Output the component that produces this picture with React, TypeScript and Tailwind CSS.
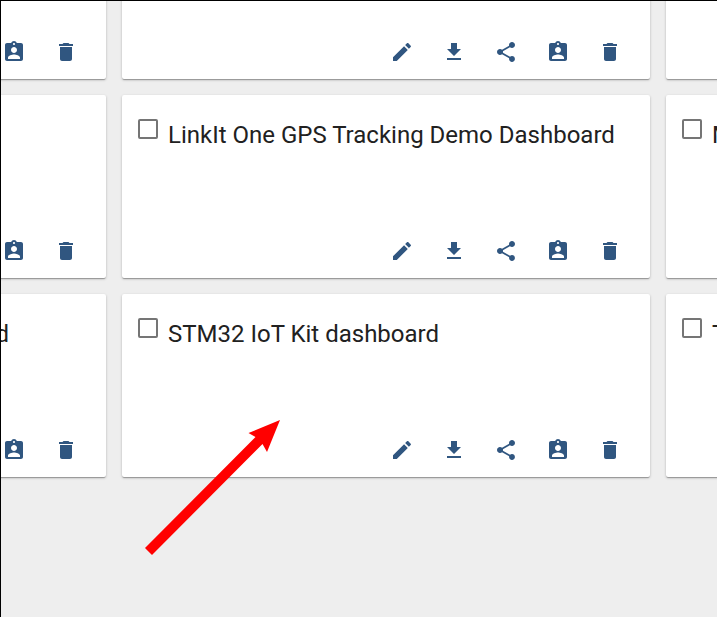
const icons = [
  "M3 17.25V21h3.75L17.81 9.94l-3.75-3.75L3 17.25zM20.71 7.04c.39-.39.39-1.02 0-1.41l-2.34-2.34c-.39-.39-1.02-.39-1.41 0l-1.83 1.83 3.75 3.75 1.83-1.83z",
  "M19 9h-4V3H9v6H5l7 7 7-7zM5 18v2h14v-2H5z",
  "M18 16.08c-.76 0-1.44.3-1.96.77L8.91 12.7c.05-.23.09-.46.09-.7s-.04-.47-.09-.7l7.05-4.11c.54.5 1.25.81 2.04.81 1.66 0 3-1.34 3-3s-1.34-3-3-3-3 1.34-3 3c0 .24.04.47.09.7L8.04 9.81C7.5 9.31 6.79 9 6 9c-1.66 0-3 1.34-3 3s1.34 3 3 3c.79 0 1.5-.31 2.04-.81l7.12 4.16c-.05.21-.08.43-.08.65 0 1.61 1.31 2.92 2.92 2.92 1.61 0 2.92-1.31 2.92-2.92s-1.31-2.92-2.92-2.92z",
  "M19 3h-4.18C14.4 1.84 13.3 1 12 1c-1.3 0-2.4.84-2.82 2H5c-1.1 0-2 .9-2 2v14c0 1.1.9 2 2 2h14c1.1 0 2-.9 2-2V5c0-1.1-.9-2-2-2zm-7 0c.55 0 1 .45 1 1s-.45 1-1 1-1-.45-1-1 .45-1 1-1zm0 4c1.66 0 3 1.34 3 3s-1.34 3-3 3-3-1.34-3-3 1.34-3 3-3zm6 12H6v-1.4c0-2 4-3.1 6-3.1s6 1.1 6 3.1V19z",
  "M6 19c0 1.1.9 2 2 2h8c1.1 0 2-.9 2-2V7H6v12zM19 4h-3.5l-1-1h-5l-1 1H5v2h14V4z",
];

function Card({ title, alignEnd = false }: { title?: string; alignEnd?: boolean }) {
  return (
    <div className="flex h-[183px] w-[528px] shrink-0 flex-col justify-between rounded-[2px] bg-white shadow-[0_1px_3px_0_rgba(0,0,0,0.2),0_1px_1px_0_rgba(0,0,0,0.16),0_2px_1px_-1px_rgba(0,0,0,0.14)]">
      <div className="flex pl-4 pt-6">
        <span className="h-5 w-5 shrink-0 rounded-[2px] border-2 border-[#757575]" />
        <span className={`ml-[10px] whitespace-nowrap text-[24px] leading-8 text-[#212121] ${alignEnd ? "w-[385px] text-right" : ""}`}>
          {title}
        </span>
      </div>
      <div className="flex justify-end gap-7 pb-[15px] pr-7">
        {icons.map((d) => (
          <svg key={d} viewBox="0 0 24 24" className="h-6 w-6 fill-[#305680]">
            <path d={d} />
          </svg>
        ))}
      </div>
    </div>
  );
}

export default function App() {
  return (
    <main className="relative h-[617px] w-[717px] overflow-hidden border-l border-t border-black bg-[#eee] font-[Roboto,sans-serif]">
      <div className="-ml-[423px] -mt-[105px] grid w-[1616px] grid-cols-[528px_528px_528px] gap-4">
        <Card />
        <Card />
        <Card />
        <Card />
        <Card title="LinkIt One GPS Tracking Demo Dashboard" />
        <Card title="M" />
        <Card title="d" alignEnd />
        <Card title="STM32 IoT Kit dashboard" />
        <Card title="T" />
      </div>
      <svg viewBox="0 0 717 617" className="pointer-events-none absolute -left-px -top-px h-[617px] w-[717px]">
        <path d="M145 548L255.5 437L248.5 433L280 420L267 452L262.5 444L152 555Z" fill="#ff0000" />
      </svg>
    </main>
  );
}
